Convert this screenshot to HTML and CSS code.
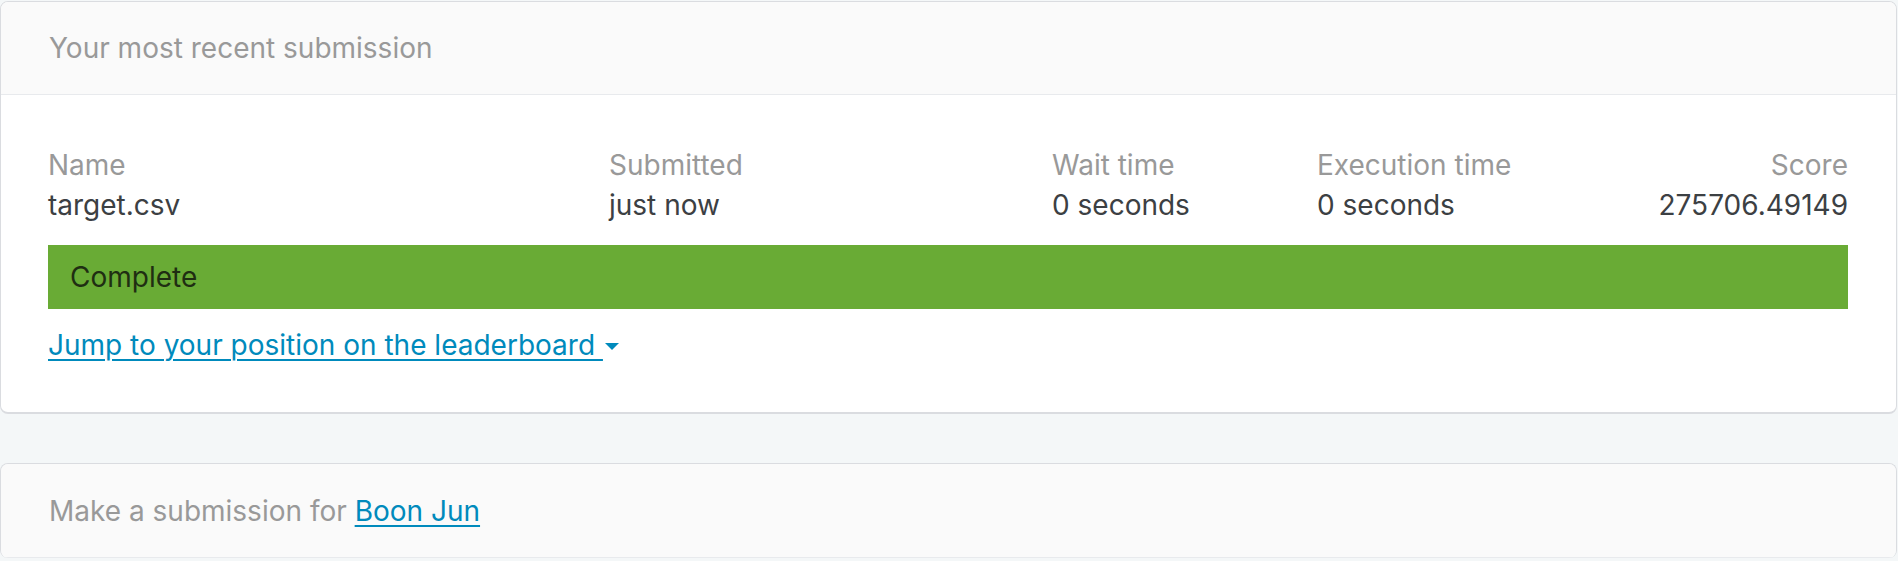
FILE: index.html
```html
<!DOCTYPE html>
<html lang="en">
<head>
<meta charset="utf-8">
<title>Submission</title>
<link rel="stylesheet" href="styles.css">
</head>
<body>
<div class="page">
  <section class="card">
    <header class="card-header">Your most recent submission</header>
    <div class="card-body">
      <div class="stats">
        <div class="stat">
          <div class="label">Name</div>
          <div class="value">target.csv</div>
        </div>
        <div class="stat">
          <div class="label">Submitted</div>
          <div class="value">just now</div>
        </div>
        <div class="stat">
          <div class="label">Wait time</div>
          <div class="value">0 seconds</div>
        </div>
        <div class="stat">
          <div class="label">Execution time</div>
          <div class="value">0 seconds</div>
        </div>
        <div class="stat stat-right">
          <div class="label">Score</div>
          <div class="value">275706.49149</div>
        </div>
      </div>
      <div class="status">Complete</div>
      <a class="jump" href="#"><span class="jump-text">Jump to your position on the leaderboard </span><span class="caret"></span></a>
    </div>
  </section>
  <section class="card card-second">
    <header class="card-header">Make a submission for <a class="user" href="#">Boon Jun</a></header>
  </section>
</div>
</body>
</html>
```
FILE: styles.css
```css
html, body {
  margin: 0;
  padding: 0;
}
body {
  background: #f4f7f8;
  font-family: Inter, "Noto Sans", sans-serif;
  color: #3c4043;
}
.page {
  padding-top: 1px;
  padding-right: 1px;
  display: flex;
  flex-direction: column;
  gap: 49px;
}
.card {
  background: #ffffff;
  border: 1px solid #dadce0;
  border-bottom-width: 2px;
  border-radius: 8px;
  overflow: hidden;
}
.card-header {
  background: #fafafa;
  border-bottom: 1px solid #e8eaed;
  height: 93px;
  box-sizing: border-box;
  display: flex;
  align-items: center;
  padding: 0 48px;
  font-size: 28px;
  color: #999999;
  white-space: pre;
}
.card-second {
  border-bottom: none;
}
.card-second .card-header {
  height: 94px;
}
.user {
  color: #008abc;
  text-decoration: underline;
  text-decoration-thickness: 2px;
  text-underline-offset: 4px;
}
.card-body {
  padding: 50px 48px 47px 47px;
  display: flex;
  flex-direction: column;
  align-items: flex-start;
}
.stats {
  align-self: stretch;
  display: grid;
  grid-template-columns: 561px 443px 265px 1fr auto;
  font-size: 28px;
  line-height: 40px;
}
.stat-right {
  text-align: right;
}
.label {
  color: #999999;
}
.value {
  color: #3c4043;
}
.status {
  align-self: stretch;
  margin-top: 20px;
  height: 64px;
  background: #69ab35;
  display: flex;
  align-items: center;
  padding-left: 22px;
  font-size: 28px;
  color: #1f2e12;
}
.jump {
  margin-top: 16px;
  font-size: 28px;
  line-height: 40px;
  color: #008abc;
  text-decoration: none;
  display: inline-flex;
  align-items: center;
}
.jump-text {
  text-decoration: underline;
  text-decoration-thickness: 2px;
  text-underline-offset: 4px;
  white-space: pre;
}
.caret {
  width: 0;
  height: 0;
  border-left: 7px solid transparent;
  border-right: 7px solid transparent;
  border-top: 7px solid #008abc;
  margin-left: 2px;
  margin-top: 2px;
}
```
